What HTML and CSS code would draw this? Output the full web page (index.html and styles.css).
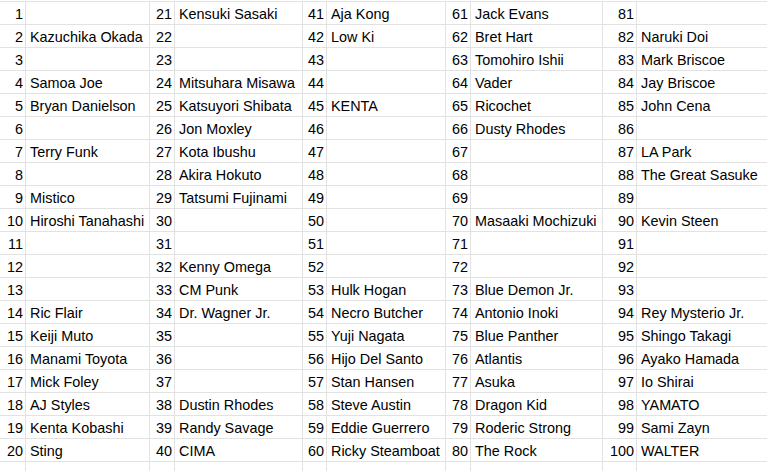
FILE: index.html
```html
<!DOCTYPE html>
<html>
<head>
<meta charset="utf-8">
<link rel="stylesheet" href="styles.css">
</head>
<body>
<div class="sheet">
<div class="n">1</div><div class="t"></div><div class="n">21</div><div class="t">Kensuki Sasaki</div><div class="n">41</div><div class="t">Aja Kong</div><div class="n">61</div><div class="t">Jack Evans</div><div class="n">81</div><div class="t"></div>
<div class="n">2</div><div class="t">Kazuchika Okada</div><div class="n">22</div><div class="t"></div><div class="n">42</div><div class="t">Low Ki</div><div class="n">62</div><div class="t">Bret Hart</div><div class="n">82</div><div class="t">Naruki Doi</div>
<div class="n">3</div><div class="t"></div><div class="n">23</div><div class="t"></div><div class="n">43</div><div class="t"></div><div class="n">63</div><div class="t">Tomohiro Ishii</div><div class="n">83</div><div class="t">Mark Briscoe</div>
<div class="n">4</div><div class="t">Samoa Joe</div><div class="n">24</div><div class="t">Mitsuhara Misawa</div><div class="n">44</div><div class="t"></div><div class="n">64</div><div class="t">Vader</div><div class="n">84</div><div class="t">Jay Briscoe</div>
<div class="n">5</div><div class="t">Bryan Danielson</div><div class="n">25</div><div class="t">Katsuyori Shibata</div><div class="n">45</div><div class="t">KENTA</div><div class="n">65</div><div class="t">Ricochet</div><div class="n">85</div><div class="t">John Cena</div>
<div class="n">6</div><div class="t"></div><div class="n">26</div><div class="t">Jon Moxley</div><div class="n">46</div><div class="t"></div><div class="n">66</div><div class="t">Dusty Rhodes</div><div class="n">86</div><div class="t"></div>
<div class="n">7</div><div class="t">Terry Funk</div><div class="n">27</div><div class="t">Kota Ibushu</div><div class="n">47</div><div class="t"></div><div class="n">67</div><div class="t"></div><div class="n">87</div><div class="t">LA Park</div>
<div class="n">8</div><div class="t"></div><div class="n">28</div><div class="t">Akira Hokuto</div><div class="n">48</div><div class="t"></div><div class="n">68</div><div class="t"></div><div class="n">88</div><div class="t">The Great Sasuke</div>
<div class="n">9</div><div class="t">Mistico</div><div class="n">29</div><div class="t">Tatsumi Fujinami</div><div class="n">49</div><div class="t"></div><div class="n">69</div><div class="t"></div><div class="n">89</div><div class="t"></div>
<div class="n">10</div><div class="t">Hiroshi Tanahashi</div><div class="n">30</div><div class="t"></div><div class="n">50</div><div class="t"></div><div class="n">70</div><div class="t">Masaaki Mochizuki</div><div class="n">90</div><div class="t">Kevin Steen</div>
<div class="n">11</div><div class="t"></div><div class="n">31</div><div class="t"></div><div class="n">51</div><div class="t"></div><div class="n">71</div><div class="t"></div><div class="n">91</div><div class="t"></div>
<div class="n">12</div><div class="t"></div><div class="n">32</div><div class="t">Kenny Omega</div><div class="n">52</div><div class="t"></div><div class="n">72</div><div class="t"></div><div class="n">92</div><div class="t"></div>
<div class="n">13</div><div class="t"></div><div class="n">33</div><div class="t">CM Punk</div><div class="n">53</div><div class="t">Hulk Hogan</div><div class="n">73</div><div class="t">Blue Demon Jr.</div><div class="n">93</div><div class="t"></div>
<div class="n">14</div><div class="t">Ric Flair</div><div class="n">34</div><div class="t">Dr. Wagner Jr.</div><div class="n">54</div><div class="t">Necro Butcher</div><div class="n">74</div><div class="t">Antonio Inoki</div><div class="n">94</div><div class="t">Rey Mysterio Jr.</div>
<div class="n">15</div><div class="t">Keiji Muto</div><div class="n">35</div><div class="t"></div><div class="n">55</div><div class="t">Yuji Nagata</div><div class="n">75</div><div class="t">Blue Panther</div><div class="n">95</div><div class="t">Shingo Takagi</div>
<div class="n">16</div><div class="t">Manami Toyota</div><div class="n">36</div><div class="t"></div><div class="n">56</div><div class="t">Hijo Del Santo</div><div class="n">76</div><div class="t">Atlantis</div><div class="n">96</div><div class="t">Ayako Hamada</div>
<div class="n">17</div><div class="t">Mick Foley</div><div class="n">37</div><div class="t"></div><div class="n">57</div><div class="t">Stan Hansen</div><div class="n">77</div><div class="t">Asuka</div><div class="n">97</div><div class="t">Io Shirai</div>
<div class="n">18</div><div class="t">AJ Styles</div><div class="n">38</div><div class="t">Dustin Rhodes</div><div class="n">58</div><div class="t">Steve Austin</div><div class="n">78</div><div class="t">Dragon Kid</div><div class="n">98</div><div class="t">YAMATO</div>
<div class="n">19</div><div class="t">Kenta Kobashi</div><div class="n">39</div><div class="t">Randy Savage</div><div class="n">59</div><div class="t">Eddie Guerrero</div><div class="n">79</div><div class="t">Roderic Strong</div><div class="n">99</div><div class="t">Sami Zayn</div>
<div class="n">20</div><div class="t">Sting</div><div class="n">40</div><div class="t">CIMA</div><div class="n">60</div><div class="t">Ricky Steamboat</div><div class="n">80</div><div class="t">The Rock</div><div class="n">100</div><div class="t">WALTER</div>
<div class="n"></div><div class="t"></div><div class="n"></div><div class="t"></div><div class="n"></div><div class="t"></div><div class="n"></div><div class="t"></div><div class="n"></div><div class="t"></div>
</div>
</body>
</html>
```
FILE: styles.css
```css
html, body {
  margin: 0;
  padding: 0;
  background: #ffffff;
  overflow: hidden;
}
body {
  padding-top: 1px;
  font-family: "Liberation Sans", Arial, sans-serif;
  font-size: 14.4px;
  color: #000000;
}
.sheet {
  display: grid;
  grid-template-columns: 26px 124px 25px 128px 24px 119px 25px 132px 34px 150px;
  grid-auto-rows: 23px;
  border-top: 1px solid #e2e2e2;
  width: 787px;
}
.n, .t {
  box-sizing: border-box;
  height: 23px;
  padding-top: 1px;
  border-right: 1px solid #e2e2e2;
  border-bottom: 1px solid #e2e2e2;
  line-height: 22px;
  white-space: nowrap;
  overflow: hidden;
}
.n {
  text-align: right;
  padding-right: 2px;
}
.t {
  text-align: left;
  padding-left: 4px;
}
```
